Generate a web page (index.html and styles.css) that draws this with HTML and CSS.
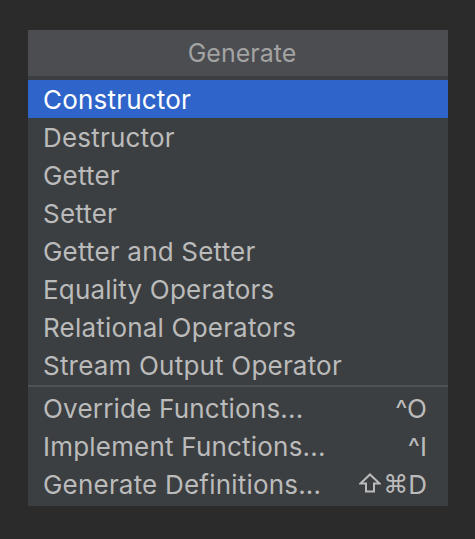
FILE: index.html
```html
<!DOCTYPE html>
<html>
<head>
<meta charset="utf-8">
<link rel="stylesheet" href="styles.css">
</head>
<body>
<div class="popup">
  <div class="header">Generate</div>
  <div class="list">
    <div class="row selected">Constructor</div>
    <div class="row">Destructor</div>
    <div class="row">Getter</div>
    <div class="row">Setter</div>
    <div class="row">Getter and Setter</div>
    <div class="row">Equality Operators</div>
    <div class="row">Relational Operators</div>
    <div class="row">Stream Output Operator</div>
    <div class="sep"></div>
    <div class="row"><span>Override Functions...</span><span class="key">^O</span></div>
    <div class="row"><span>Implement Functions...</span><span class="key">^I</span></div>
    <div class="row"><span>Generate Definitions...</span><span class="key"><svg class="shift" width="22" height="20" viewBox="0 0 22 20"><path d="M11 1.5 L20.5 10.5 H15 V18.5 H7 V10.5 H1.5 Z" fill="none" stroke="#bbbbbb" stroke-width="2" stroke-linejoin="miter"/></svg><span class="sym">⌘</span>D</span></div>
  </div>
</div>
</body>
</html>
```

FILE: styles.css
```css
html, body {
  margin: 0;
  padding: 0;
  background: #2b2b2b;
  width: 475px;
  height: 539px;
  overflow: hidden;
}
body {
  padding: 30px 0 0 28px;
  box-sizing: border-box;
  font-family: Inter, "Noto Sans", sans-serif;
}
.popup {
  width: 420px;
  height: 476px;
  background: #3c3f41;
  display: flex;
  flex-direction: column;
}
.header {
  height: 46px;
  background: #4b4d51;
  color: #a3a3a3;
  font-size: 25px;
  display: flex;
  align-items: center;
  justify-content: center;
  padding-left: 8px;
}
.list {
  padding-top: 4px;
  display: flex;
  flex-direction: column;
}
.row {
  height: 38px;
  display: flex;
  align-items: center;
  justify-content: space-between;
  padding: 0 21px 0 15px;
  color: #bbbbbb;
  font-size: 26px;
  letter-spacing: 0.2px;
}
.row.selected {
  background: #2f65ca;
  color: #ffffff;
}
.sep {
  height: 2px;
  background: #4e5254;
  margin: 1px 0 2px;
}
.key {
  letter-spacing: 0;
  display: flex;
  align-items: center;
}
.shift {
  margin-right: 2px;
  margin-top: -2px;
}
.sym {
  font-family: "DejaVu Sans", sans-serif;
  font-size: 25px;
}
```
